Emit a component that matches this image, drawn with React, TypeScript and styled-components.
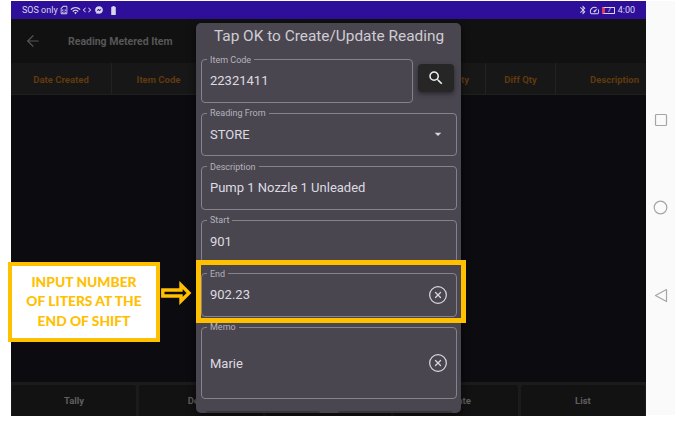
import React from "react";
import styled, { createGlobalStyle } from "styled-components";
import { ArrowLeft, CircleX } from "lucide-react";
import {
  MdArrowDropDown,
  MdBatteryFull,
  MdBluetooth,
  MdCode,
  MdOutlineSimCard,
  MdSearch,
  MdSpeed,
  MdWifi,
} from "react-icons/md";
import { FaFacebookMessenger } from "react-icons/fa";

const GlobalStyle = createGlobalStyle`
  html, body {
    margin: 0;
    padding: 0;
    background: #fff;
    font-family: Roboto, "Liberation Sans", sans-serif;
  }
`;

const Page = styled.div`
  width: 677px;
  height: 429px;
  padding: 1px 0 0 11px;
  box-sizing: border-box;
  display: flex;
  overflow: hidden;
  position: relative;
`;

const Screen = styled.div`
  width: 635px;
  height: 415px;
  position: relative;
  display: flex;
  flex-direction: column;
  background: #0c0b10;
  overflow: hidden;
`;

const NavRail = styled.div`
  width: 29px;
  height: 414px;
  background: #fafafa;
  display: flex;
  flex-direction: column;
  align-items: center;
  padding: 112px 0 0 0;
  box-sizing: border-box;
  gap: 73px;
  color: #a5a5a5;
`;

const StatusBar = styled.div`
  height: 18px;
  flex: none;
  background: #2e0f9a;
  color: #d9d6ea;
  display: flex;
  align-items: center;
  justify-content: space-between;
  padding: 0 11px 0 11px;
  font-size: 9px;
`;

const StatusGroup = styled.div`
  display: flex;
  align-items: center;
  gap: 1px;
`;

const BatteryBox = styled.span`
  width: 13px;
  height: 7px;
  border: 1px solid #d9d6ea;
  border-left: 3px solid #e0375e;
  border-radius: 1px;
  box-sizing: border-box;
  display: flex;
  align-items: center;
  justify-content: center;
  font-size: 7px;
  line-height: 1;
  margin: 0 2px 0 1px;
`;

const Messenger = styled(FaFacebookMessenger)`
  margin: 0 4px 0 2px;
`;

const AppBar = styled.div`
  height: 44px;
  flex: none;
  background: #111112;
  color: #575757;
  display: flex;
  align-items: center;
  padding-left: 13px;
  gap: 26px;
`;

const AppTitle = styled.div`
  font-size: 10.5px;
  font-weight: 700;
`;

const TableHeader = styled.div`
  height: 32px;
  flex: none;
  background: #171717;
  display: grid;
  grid-template-columns: 101px 94px 94px 58px 128px 70px 90px;
  border-bottom: 1px solid #1f1f1f;
  box-sizing: border-box;
`;

const HeaderCell = styled.div<{ $end?: number }>`
  display: flex;
  align-items: center;
  justify-content: ${(p) => (p.$end ? "flex-end" : "center")};
  padding: 2px ${(p) => p.$end ?? 0}px 0 0;
  font-size: 9.5px;
  font-weight: 700;
  color: #613a0e;
  border-right: 1px solid #222;

  &:last-child {
    border-right: none;
  }
`;

const TableBody = styled.div`
  flex: 1;
`;

const BottomBar = styled.div`
  height: 34px;
  flex: none;
  background: #1b1b1b;
  display: grid;
  grid-template-columns: repeat(5, 1fr);
  gap: 3px;
  padding: 3px 1px 0;
  box-sizing: border-box;
`;

const BottomButton = styled.div`
  background: #121212;
  color: #5f5f5f;
  font-size: 9.5px;
  font-weight: 700;
  display: flex;
  align-items: center;
  justify-content: center;
  border-radius: 3px 3px 0 0;
`;

const Modal = styled.div`
  position: absolute;
  left: 185px;
  top: 22px;
  width: 265px;
  height: 390px;
  background: #4a4650;
  border-radius: 5px;
  box-shadow: 0 2px 8px rgba(0, 0, 0, 0.6);
  padding: 0 4px 0 5px;
  box-sizing: border-box;
  display: flex;
  flex-direction: column;
  gap: 5.5px;
  overflow: hidden;
`;

const ModalTitle = styled.div`
  height: 26px;
  flex: none;
  font-size: 15.4px;
  line-height: 26px;
  color: #cfcdd3;
  text-align: center;
`;

const ItemRow = styled.div`
  display: flex;
  align-items: flex-start;
  gap: 5px;
`;

const Field = styled.fieldset<{ $width?: number; $tall?: boolean }>`
  margin: 0;
  padding: 0 8px 0 8px;
  min-width: 0;
  width: ${(p) => (p.$width ? `${p.$width}px` : "100%")};
  height: ${(p) => (p.$tall ? "77px" : "48px")};
  box-sizing: border-box;
  flex: none;
  border: 1px solid #85828c;
  border-radius: 4px;
  color: #dddbe1;
  font-size: 13px;
`;

const FieldLabel = styled.legend`
  font-size: 9px;
  line-height: 10px;
  color: #b5b2bb;
  padding: 0 3px;
  margin-left: -3px;
`;

const FieldBody = styled.div<{ $tall?: boolean }>`
  height: ${(p) => (p.$tall ? "62px" : "32px")};
  display: flex;
  align-items: center;
  justify-content: space-between;
`;

const FieldValue = styled.span`
  display: block;
`;

const FieldIcon = styled.span<{ $inset?: number }>`
  display: flex;
  margin-right: ${(p) => p.$inset ?? 0}px;
  color: #d8d6dc;
`;

const SearchButton = styled.div`
  width: 36px;
  height: 28px;
  margin-top: 9px;
  flex: none;
  background: #262626;
  border-radius: 4px;
  color: #eee;
  display: flex;
  align-items: center;
  justify-content: center;
  box-shadow: 0 2px 5px rgba(0, 0, 0, 0.45);
`;

const ModalActions = styled.div`
  display: grid;
  grid-template-columns: 116px 116px;
  justify-content: center;
  gap: 16px;
  margin-top: 6px;
`;

const ModalAction = styled.div`
  height: 30px;
  background: #37353b;
  border-radius: 4px;
`;

const Highlight = styled.div`
  position: absolute;
  left: 196px;
  top: 260px;
  width: 270px;
  height: 63px;
  border: 5px solid #ffc000;
  box-sizing: border-box;
  pointer-events: none;
`;

const Callout = styled.div`
  position: absolute;
  left: 8px;
  top: 262px;
  width: 152px;
  height: 80px;
  border: 4px solid #ffc000;
  background: #fff;
  box-sizing: border-box;
  color: #ffc000;
  font-family: Lato, "Liberation Sans", sans-serif;
  font-size: 13.8px;
  font-weight: 900;
  line-height: 19.5px;
  text-align: center;
  display: flex;
  align-items: center;
  justify-content: center;
  padding-bottom: 2px;
`;

const Pointer = styled.svg`
  position: absolute;
  left: 161px;
  top: 281px;
`;

function ClearableField({ label, value, tall }: { label: string; value: string; tall?: boolean }) {
  return (
    <Field $tall={tall}>
      <FieldLabel>{label}</FieldLabel>
      <FieldBody $tall={tall}>
        <FieldValue>{value}</FieldValue>
        <FieldIcon>
          <CircleX size={20} strokeWidth={1.5} />
        </FieldIcon>
      </FieldBody>
    </Field>
  );
}

export default function App() {
  return (
    <>
      <GlobalStyle />
      <Page>
        <Screen>
          <StatusBar>
            <StatusGroup>
              <span>SOS only</span>
              <MdOutlineSimCard size={10} />
              <MdWifi size={11} />
              <MdCode size={10} />
              <Messenger size={8} />
              <MdBatteryFull size={11} />
            </StatusGroup>
            <StatusGroup>
              <MdBluetooth size={10} />
              <MdSpeed size={11} />
              <BatteryBox>7</BatteryBox>
              <span>4:00</span>
            </StatusGroup>
          </StatusBar>
          <AppBar>
            <ArrowLeft size={18} strokeWidth={1.5} />
            <AppTitle>Reading Metered Item</AppTitle>
          </AppBar>
          <TableHeader>
            <HeaderCell>Date Created</HeaderCell>
            <HeaderCell>Item Code</HeaderCell>
            <HeaderCell />
            <HeaderCell />
            <HeaderCell $end={16}>End Qty</HeaderCell>
            <HeaderCell>Diff Qty</HeaderCell>
            <HeaderCell $end={7}>Description</HeaderCell>
          </TableHeader>
          <TableBody />
          <BottomBar>
            <BottomButton>Tally</BottomButton>
            <BottomButton>Delete</BottomButton>
            <BottomButton />
            <BottomButton>Update</BottomButton>
            <BottomButton>List</BottomButton>
          </BottomBar>
          <Modal>
            <ModalTitle>Tap OK to Create/Update Reading</ModalTitle>
            <ItemRow>
              <Field $width={212}>
                <FieldLabel>Item Code</FieldLabel>
                <FieldBody>
                  <FieldValue>22321411</FieldValue>
                </FieldBody>
              </Field>
              <SearchButton>
                <MdSearch size={18} />
              </SearchButton>
            </ItemRow>
            <Field>
              <FieldLabel>Reading From</FieldLabel>
              <FieldBody>
                <FieldValue>STORE</FieldValue>
                <FieldIcon $inset={2}>
                  <MdArrowDropDown size={16} />
                </FieldIcon>
              </FieldBody>
            </Field>
            <Field>
              <FieldLabel>Description</FieldLabel>
              <FieldBody>
                <FieldValue>Pump 1 Nozzle 1 Unleaded</FieldValue>
              </FieldBody>
            </Field>
            <Field>
              <FieldLabel>Start</FieldLabel>
              <FieldBody>
                <FieldValue>901</FieldValue>
              </FieldBody>
            </Field>
            <ClearableField label="End" value="902.23" />
            <ClearableField label="Memo" value="Marie" tall />
            <ModalActions>
              <ModalAction />
              <ModalAction />
            </ModalActions>
          </Modal>
        </Screen>
        <NavRail>
          <svg width="14" height="14" viewBox="0 0 14 14">
            <rect x="1.5" y="1.5" width="11" height="11" rx="1" fill="none" stroke="currentColor" strokeWidth="1.2" />
          </svg>
          <svg width="15" height="15" viewBox="0 0 15 15">
            <circle cx="7.5" cy="7.5" r="6.3" fill="none" stroke="currentColor" strokeWidth="1.2" />
          </svg>
          <svg width="14" height="15" viewBox="0 0 14 15">
            <path d="M12.5 1.5 L1.5 7.5 L12.5 13.5 Z" fill="none" stroke="currentColor" strokeWidth="1.2" strokeLinejoin="round" />
          </svg>
        </NavRail>
        <Highlight />
        <Callout>
          <div>
            INPUT NUMBER
            <br />
            OF LITERS AT THE
            <br />
            END OF SHIFT
          </div>
        </Callout>
        <Pointer width="31" height="24" viewBox="0 0 31 24">
          <path
            d="M1.8 9 H20 V4 L28 12 L20 20 V15 H1.8 Z"
            fill="#0c0b10"
            stroke="#ffc000"
            strokeWidth="3.4"
          />
        </Pointer>
      </Page>
    </>
  );
}
